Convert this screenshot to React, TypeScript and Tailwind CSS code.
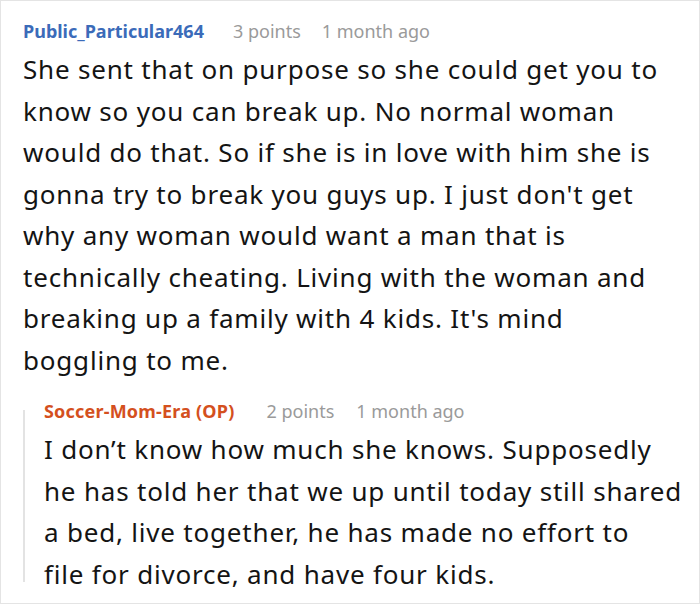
export default function App() {
  const a = [
    "She sent that on purpose so she could get you to",
    "know so you can break up. No normal woman",
    "would do that. So if she is in love with him she is",
    "gonna try to break you guys up. I just don't get",
    "why any woman would want a man that is",
    "technically cheating. Living with the woman and",
    "breaking up a family with 4 kids. It's mind",
    "boggling to me.",
  ];
  const b = [
    "I don’t know how much she knows. Supposedly",
    "he has told her that we up until today still shared",
    "a bed, live together, he has made no effort to",
    "file for divorce, and have four kids.",
  ];
  return (
    <div className="w-[700px] h-[604px] bg-white border border-[#e4e4e4] box-border pl-[22px] pr-[10px] pt-[17px] font-['Noto_Sans',sans-serif] text-[#141414] overflow-hidden">
      <div className="flex items-center gap-[29px] text-[18px] leading-[26px]">
        <span className="font-bold text-[#3b6bb9]">Public_Particular464</span>
        <span className="flex gap-[21px] text-[#9a9a9a]">
          <span>3 points</span>
          <span>1 month ago</span>
        </span>
      </div>
      <p className="text-[26px] tracking-[0.8px] leading-[41.5px] mt-[5px] whitespace-nowrap">
        {a.map((l, i) => (
          <span key={i} className="block">{l}</span>
        ))}
      </p>
      <div className="mt-[17px] flex">
        <div className="w-[2px] bg-[#e3e3e3] mt-[12px] mb-[13px] shrink-0" />
        <div className="pl-[19px]">
          <div className="flex items-center gap-[32px] text-[18px] leading-[26px]">
            <span className="font-bold text-[#d4501e] tracking-[0.2px]">Soccer-Mom-Era (OP)</span>
            <span className="flex gap-[22px] text-[#9a9a9a]">
              <span>2 points</span>
              <span>1 month ago</span>
            </span>
          </div>
          <p className="text-[26px] tracking-[0.8px] leading-[41.5px] mt-[5px] whitespace-nowrap">
            {b.map((l, i) => (
              <span key={i} className="block">{l}</span>
            ))}
          </p>
        </div>
      </div>
    </div>
  );
}
